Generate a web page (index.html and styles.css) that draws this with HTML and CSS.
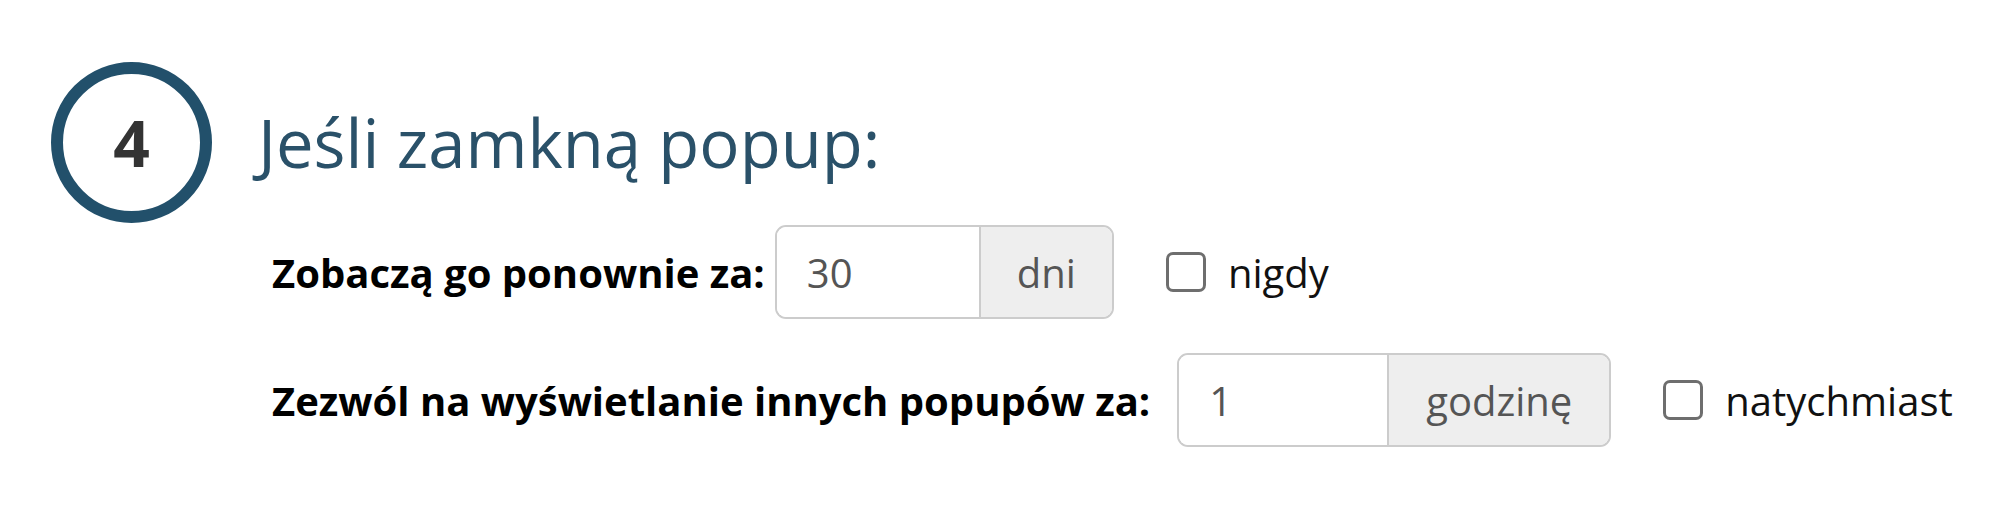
FILE: index.html
```html
<!DOCTYPE html>
<html lang="pl">
<head>
<meta charset="utf-8">
<title>Krok 4</title>
<link rel="stylesheet" href="styles.css">
</head>
<body>
<section class="step">
  <div class="step-head">
    <div class="step-num">4</div>
    <h2 class="step-title">Jeśli zamkną popup:</h2>
  </div>
  <div class="step-body">
    <div class="row">
      <label class="row-label">Zobaczą go ponownie za:</label>
      <div class="input-group">
        <input class="form-control" type="text" value="30">
        <span class="addon">dni</span>
      </div>
      <label class="check"><span class="box"></span><span>nigdy</span></label>
    </div>
    <div class="row">
      <label class="row-label row-label-wide">Zezwól na wyświetlanie innych popupów za:</label>
      <div class="input-group">
        <input class="form-control form-control-wide" type="text" value="1">
        <span class="addon addon-wide">godzinę</span>
      </div>
      <label class="check"><span class="box"></span><span>natychmiast</span></label>
    </div>
  </div>
</section>
</body>
</html>
```
FILE: styles.css
```css
html, body {
  margin: 0;
  padding: 0;
  background: #ffffff;
}
body {
  font-family: "Open Sans", "Noto Sans", sans-serif;
  color: #000;
}
.step {
  padding: 62px 0 0 51px;
}
.step-head {
  display: flex;
  align-items: center;
}
.step-num {
  box-sizing: border-box;
  width: 161px;
  height: 161px;
  border: 12px solid #22506b;
  border-radius: 50%;
  display: flex;
  align-items: center;
  justify-content: center;
  font-size: 64px;
  font-weight: 700;
  color: #333333;
}
.step-title {
  margin: 0 0 0 46px;
  font-size: 67px;
  font-weight: 400;
  color: #2a5169;
  line-height: 1.1;
}
.step-body {
  padding-left: 221px;
  display: flex;
  flex-direction: column;
  gap: 34px;
  margin-top: 2px;
}
.row {
  display: flex;
  align-items: center;
}
.row-label {
  font-size: 40px;
  font-weight: 700;
  margin-right: 10px;
}
.row-label-wide {
  margin-right: 27px;
}
.input-group {
  display: flex;
  height: 94px;
  box-sizing: border-box;
  border: 2px solid #cccccc;
  border-radius: 11px;
  overflow: hidden;
}
.form-control {
  box-sizing: border-box;
  width: 202px;
  height: 100%;
  border: 0;
  padding: 0 30px;
  font-family: inherit;
  font-size: 40px;
  color: #555555;
  background: #fff;
  outline: none;
}
.form-control-wide {
  width: 208px;
}
.addon {
  display: flex;
  align-items: center;
  padding: 0 36px;
  background: #eeeeee;
  border-left: 2px solid #cccccc;
  font-size: 40px;
  color: #555555;
}
.addon-wide {
  padding: 0 37px;
}
.check {
  display: flex;
  align-items: center;
  margin-left: 52px;
  font-size: 40px;
  color: #111;
}
.box {
  box-sizing: border-box;
  width: 40px;
  height: 40px;
  border: 3px solid #6e6e6e;
  border-radius: 7px;
  margin-right: 22px;
  background: #fff;
}
```
